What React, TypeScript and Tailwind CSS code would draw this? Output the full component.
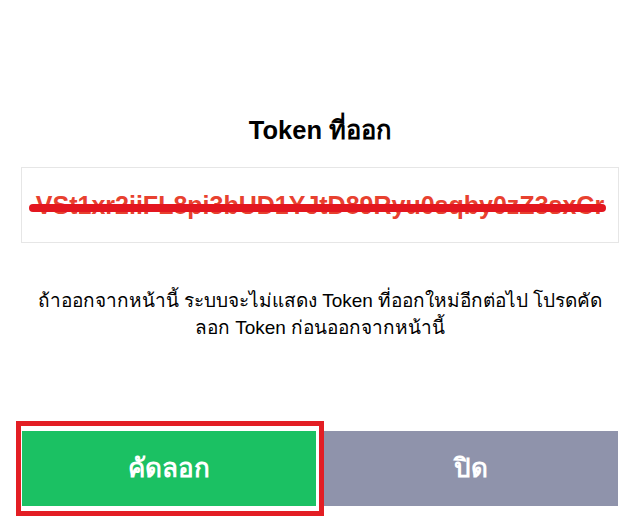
import React from "react";

const TOKEN = "VSt1xr2iiFL8pi3bUD1YJtD89Ryu0sqby0zZ3sxCr";

export default function App() {
  return (
    <div className="flex h-[528px] w-[640px] flex-col bg-white font-['Liberation_Sans','Noto_Sans','DejaVu_Sans',sans-serif] text-black">
      <h1 className="mt-[114px] h-[32px] text-center text-[25.5px] font-bold leading-[32px]">Token ที่ออก</h1>

      <div className="relative mx-[21px] mt-[21px] flex h-[76px] items-center justify-center overflow-hidden border border-[#e6e6e6]">
        <span className="whitespace-nowrap text-[25px] font-bold leading-none text-[#e8412f]">{TOKEN}</span>
        {/* hand-drawn redaction stroke */}
        <span className="absolute left-[7px] top-[36px] h-[8px] w-[577px] rounded-full bg-[#e3161f]" />
      </div>

      <p className="mt-[44px] px-2 text-center text-[19px] leading-[27px]">
        ถ้าออกจากหน้านี้ ระบบจะไม่แสดง Token ที่ออกใหม่อีกต่อไป โปรดคัด
        <br />
        ลอก Token ก่อนออกจากหน้านี้
      </p>

      <div className="mt-[90px] flex gap-[8px] px-[22px]">
        <div className="relative flex-1">
          <button className="flex h-[75px] w-full items-center justify-center bg-[#1bc163] text-[26px] font-bold text-white">คัดลอก</button>
          <span className="pointer-events-none absolute -bottom-[10px] -left-[6px] -right-[8px] -top-[10px] border-[5px] border-[#e31e24]" />
        </div>
        <button className="flex h-[75px] flex-1 items-center justify-center bg-[#8f93ab] text-[26px] font-bold text-white">ปิด</button>
      </div>
    </div>
  );
}
